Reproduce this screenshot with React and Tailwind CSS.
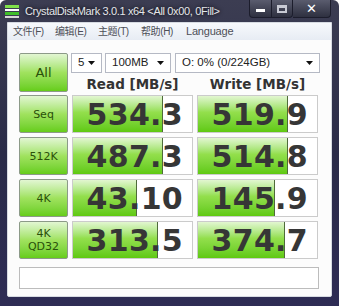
import React from 'react';

const rows = [
  { label: ['Seq'], read: '534.3', readFill: 90, write: '519.9', writeFill: 90 },
  { label: ['512K'], read: '487.3', readFill: 90, write: '514.8', writeFill: 90 },
  { label: ['4K'], read: '43.10', readFill: 64, write: '145.9', writeFill: 77 },
  { label: ['4K', 'QD32'], read: '313.5', readFill: 85, write: '374.7', writeFill: 87 },
];

const menu = ['文件(F)', '编辑(E)', '主题(T)', '帮助(H)', 'Language'];

// little black dropdown arrow
function Arrow() {
  return (
    <svg width="7" height="4" viewBox="0 0 7 4" className="shrink-0">
      <path d="M0 0h7L3.5 4z" fill="#111" />
    </svg>
  );
}

function Select({ text, className }) {
  return (
    <div className={`flex h-[20px] items-center justify-between border border-[#b5b9c4] bg-white pl-[6px] pr-[6px] text-[11.5px] text-[#222] ${className}`}>
      <span>{text}</span>
      <Arrow />
    </div>
  );
}

function GreenButton({ children, className }) {
  return (
    <div className={`flex flex-col items-center justify-center rounded-[2px] border border-[#8c9a88] bg-linear-to-b from-[#e2f6d2] via-[#a0e25e] via-50% to-[#66cd17] font-['DejaVu_Sans',sans-serif] leading-[13px] text-[#2a500a] ${className}`}>
      {children}
    </div>
  );
}

function Tile({ value, fill }) {
  return (
    <div className="relative h-full w-[121px] overflow-hidden border border-[#cbcbcb] bg-white">
      <div
        className="absolute inset-y-0 left-0 border-r border-[#4f6b3a] bg-linear-to-b from-[#e2f6d0] via-[#93df4c] via-45% to-[#5fc90f]"
        style={{ width: fill }}
      />
      <div className="relative flex h-full items-center justify-end pr-[9px] font-['DejaVu_Sans',sans-serif] text-[30px] font-bold tracking-[0.3px] text-[#363636]">
        {value}
      </div>
    </div>
  );
}

export default function App() {
  return (
    <div className="flex h-[306px] w-[339px] flex-col overflow-hidden rounded-t-[6px] bg-linear-to-b from-[#3c3d52] via-[#2a2b48] to-[#2e2c55] font-['Liberation_Sans','Noto_Sans_CJK_SC',sans-serif]">
      {/* title bar */}
      <div className="flex h-[22px] shrink-0 items-start">
        <div className="ml-[5px] mt-[5px] flex h-[13px] w-[14px] flex-col gap-[1px]">
          <div className="h-[3px] bg-[#7fe04a]" />
          <div className="h-[3px] bg-white" />
          <div className="h-[3px] bg-[#3fbf2a]" />
          <div className="h-[3px] bg-[#d8d8d8]" />
        </div>
        <div className="ml-[6px] mt-[5px] text-[11px] leading-[13px] tracking-[-0.35px] text-[#e4e6ea] [text-shadow:0_0_4px_#000]">
          CrystalDiskMark 3.0.1 x64 &lt;All 0x00, 0Fill&gt;
        </div>
        <div className="ml-auto mr-[8px] flex">
          <div className="flex h-[18px] overflow-hidden rounded-b-[4px] border border-t-0 border-[#1c1d2c] bg-linear-to-b from-[#5a5c6e] to-[#2e3040]">
            <div className="flex w-[22px] items-center justify-center border-r border-[#1c1d2c]">
              <div className="mt-[4px] h-[3px] w-[9px] bg-white" />
            </div>
            <div className="flex w-[20px] items-center justify-center">
              <div className="h-[8px] w-[10px] border-2 border-t-[3px] border-[#c8cad4]" />
            </div>
          </div>
          <div className="flex h-[18px] w-[38px] items-center justify-center rounded-br-[4px] border border-l-0 border-t-0 border-[#1c1d2c] bg-linear-to-b from-[#5a5c6e] to-[#2e3040] font-['DejaVu_Sans',sans-serif] text-[13px] font-bold text-white">
            ✕
          </div>
        </div>
      </div>

      {/* client area */}
      <div className="mx-[7px] mb-[9px] flex flex-1 flex-col rounded-b-[2px] border border-[#d7dbe2] bg-[#fcfcfc]">
        <div className="flex h-[17px] shrink-0 items-center bg-linear-to-b from-[#f7f9fc] to-[#e7ecf4] pl-[5px] text-[10px] tracking-[-0.4px] text-[#4d4f57]">
          <span className="w-[42px]">{menu[0]}</span>
          <span className="w-[43px]">{menu[1]}</span>
          <span className="w-[43px]">{menu[2]}</span>
          <span className="w-[45px]">{menu[3]}</span>
          <span className="text-[11px] tracking-[-0.2px]">{menu[4]}</span>
        </div>

        <div className="flex flex-col pl-[11px] pt-[13px]">
          <div className="flex gap-[4px]">
            <GreenButton className="h-[39px] w-[49px] text-[13px]">All</GreenButton>
            <div className="flex flex-col">
              <div className="-ml-[1px] flex gap-[3px]">
                <Select text="5" className="w-[31px]" />
                <Select text="100MB" className="w-[66px]" />
                <Select text="O: 0% (0/224GB)" className="ml-[1px] w-[145px]" />
              </div>
              <div className="mt-[3px] flex gap-[4px] font-['DejaVu_Sans',sans-serif] text-[13.5px] font-bold leading-[16px] text-[#333]">
                <div className="w-[121px] text-center">Read [MB/s]</div>
                <div className="w-[121px] text-center">Write [MB/s]</div>
              </div>
            </div>
          </div>

          <div className="mt-[3px] flex flex-col gap-[4px]">
            {rows.map((r) => (
              <div key={r.read} className="flex h-[38px] gap-[4px]">
                <GreenButton className="h-full w-[49px] text-[11px]">
                  {r.label.map((l) => (
                    <span key={l}>{l}</span>
                  ))}
                </GreenButton>
                <Tile value={r.read} fill={r.readFill} />
                <Tile value={r.write} fill={r.writeFill} />
              </div>
            ))}
          </div>

          <div className="mt-[8px] h-[22px] w-[300px] border border-[#bcbcbc] bg-white" />
        </div>
      </div>
    </div>
  );
}
